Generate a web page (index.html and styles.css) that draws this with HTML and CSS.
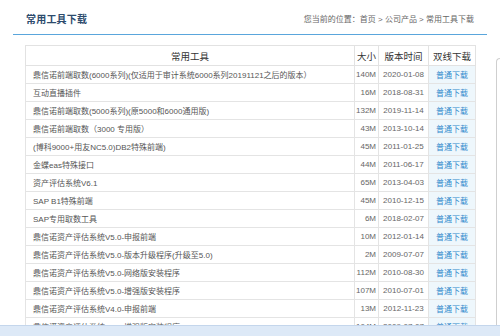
FILE: index.html
```html
<!DOCTYPE html>
<html lang="zh-CN">
<head>
  <meta charset="UTF-8">
  <title>常用工具下载</title>
  <link rel="stylesheet" href="styles.css">
</head>
<body>
  <div class="page">
    <div class="main">
      <div class="top">
        <h2>常用工具下载</h2>
        <div class="crumb">您当前的位置：首页 &gt; 公司产品 &gt; 常用工具下载</div>
      </div>

      <table class="tools">
        <thead>
          <tr>
            <th class="c-name">常用工具</th>
            <th class="c-size">大小</th>
            <th class="c-date">版本时间</th>
            <th class="c-dl">双线下载</th>
          </tr>
        </thead>
        <tbody>
          <tr><td>鼎信诺前端取数(6000系列)(仅适用于审计系统6000系列20191121之后的版本）</td><td class="size">140M</td><td class="date">2020-01-08</td><td class="dl"><a href="#">普通下载</a></td></tr>
          <tr><td>互动直播插件</td><td class="size">16M</td><td class="date">2018-08-31</td><td class="dl"><a href="#">普通下载</a></td></tr>
          <tr><td>鼎信诺前端取数(5000系列)(原5000和6000通用版)</td><td class="size">132M</td><td class="date">2019-11-14</td><td class="dl"><a href="#">普通下载</a></td></tr>
          <tr><td>鼎信诺前端取数（3000 专用版）</td><td class="size">43M</td><td class="date">2013-10-14</td><td class="dl"><a href="#">普通下载</a></td></tr>
          <tr><td>(博科9000+用友NC5.0)DB2特殊前端)</td><td class="size">45M</td><td class="date">2011-01-25</td><td class="dl"><a href="#">普通下载</a></td></tr>
          <tr><td>金蝶eas特殊接口</td><td class="size">44M</td><td class="date">2011-06-17</td><td class="dl"><a href="#">普通下载</a></td></tr>
          <tr><td>资产评估系统V6.1</td><td class="size">65M</td><td class="date">2013-04-03</td><td class="dl"><a href="#">普通下载</a></td></tr>
          <tr><td>SAP B1特殊前端</td><td class="size">45M</td><td class="date">2010-12-15</td><td class="dl"><a href="#">普通下载</a></td></tr>
          <tr><td>SAP专用取数工具</td><td class="size">6M</td><td class="date">2018-02-07</td><td class="dl"><a href="#">普通下载</a></td></tr>
          <tr><td>鼎信诺资产评估系统V5.0-申报前端</td><td class="size">10M</td><td class="date">2012-01-14</td><td class="dl"><a href="#">普通下载</a></td></tr>
          <tr><td>鼎信诺资产评估系统V5.0-版本升级程序(升级至5.0)</td><td class="size">2M</td><td class="date">2009-07-07</td><td class="dl"><a href="#">普通下载</a></td></tr>
          <tr><td>鼎信诺资产评估系统V5.0-网络版安装程序</td><td class="size">112M</td><td class="date">2010-08-30</td><td class="dl"><a href="#">普通下载</a></td></tr>
          <tr><td>鼎信诺资产评估系统V5.0-增强版安装程序</td><td class="size">107M</td><td class="date">2010-07-01</td><td class="dl"><a href="#">普通下载</a></td></tr>
          <tr><td>鼎信诺资产评估系统V4.0-申报前端</td><td class="size">13M</td><td class="date">2012-11-23</td><td class="dl"><a href="#">普通下载</a></td></tr>
          <tr><td>鼎信诺资产评估系统V4.0-增强版安装程序</td><td class="size">104M</td><td class="date">2009-07-07</td><td class="dl"><a href="#">普通下载</a></td></tr>
        </tbody>
      </table>
    </div>

    <div class="side"></div>
  </div>

  <div class="bottom-bar"></div>
</body>
</html>
```

FILE: styles.css
```css
/* General */
body {
  margin: 0;
  background: #fff;
  font-family: "Liberation Sans", "Noto Sans CJK SC", sans-serif;
  color: #555;
  overflow: hidden;
}

.page {
  display: flex;
  align-items: flex-start;
  height: 336px;
  overflow: hidden;
}

.main {
  width: 474px;
  margin-left: 13px;
  flex-shrink: 0;
}

/* Title bar */
.top {
  display: flex;
  justify-content: space-between;
  align-items: center;
  height: 35px;
  padding: 0 13px;
  border-bottom: 1px solid #5aa6dc;
  box-sizing: border-box;
}

.top h2 {
  margin: 2px 0 0;
  font-size: 10px;
  font-weight: bold;
  color: #2d4b6d;
  letter-spacing: 0.2px;
}

.crumb {
  margin-top: 2px;
  font-size: 8px;
  color: #666;
}

/* Table */
.tools {
  margin: 10px 0 0 12px;
  width: 450px;
  border-collapse: collapse;
  border: 1px solid #e2e2e2;
  table-layout: fixed;
  font-size: 8px;
}

.tools th {
  height: 20px;
  padding: 0;
  font-size: 9.5px;
  font-weight: normal;
  color: #333;
  text-align: center;
  border: 1px solid #e2e2e2;
  box-sizing: border-box;
}

.tools .c-name { width: 329px; }
.tools .c-size { width: 24px; }
.tools .c-date { width: 50px; }
.tools .c-dl { width: 47px; }

.tools td {
  height: 17px;
  padding: 0 0 0 7px;
  border: 1px solid #e4e4e4;
  white-space: nowrap;
  overflow: hidden;
  color: #555;
}

.tools td.size {
  text-align: right;
  padding: 0 2px 0 0;
  color: #666;
}

.tools td.date {
  text-align: center;
  padding: 0;
  color: #666;
}

.tools td.dl {
  text-align: center;
  padding: 0;
  background: #eef7fc;
}

.tools td.dl a {
  color: #3189cc;
  text-decoration: none;
}

/* Right panel */
.side {
  margin: 58px 0 0 9px;
  height: 280px;
  flex: 1;
  border: 1px solid #cfcfcf;
  border-right: none;
  border-radius: 4px 0 0 4px;
}

/* Bottom band */
.bottom-bar {
  position: fixed;
  left: 0;
  right: 0;
  bottom: 0;
  height: 10px;
  background: #dde9f7;
  border-top: 1px solid #c4d6ec;
}
```
